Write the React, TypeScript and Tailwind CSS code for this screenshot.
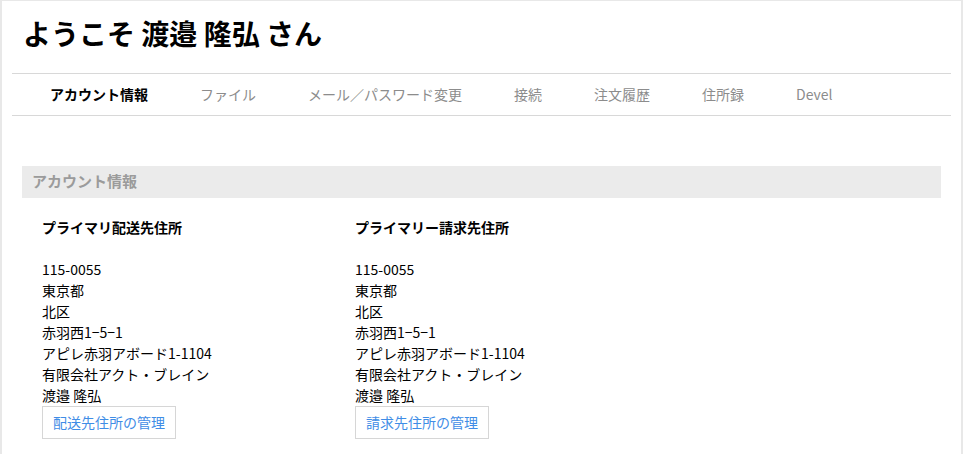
const navItems = [
  { label: "アカウント情報", active: true },
  { label: "ファイル" },
  { label: "メール／パスワード変更" },
  { label: "接続" },
  { label: "注文履歴" },
  { label: "住所録" },
  { label: "Devel" },
];

const addressLines = [
  "115-0055",
  "東京都",
  "北区",
  "赤羽西1−5−1",
  "アピレ赤羽アボード1-1104",
  "有限会社アクト・ブレイン",
  "渡邉 隆弘",
];

interface AddressBlockProps {
  title: string;
  action: string;
}

const AddressBlock = ({ title, action }: AddressBlockProps) => {
  return (
    <div className="w-[313px] shrink-0">
      <h3 className="mb-[21px] text-[14px] font-bold leading-[21px] text-black">{title}</h3>
      <div className="text-[14px] leading-[21px] text-black">
        {addressLines.map((line) => (
          <div key={line}>{line}</div>
        ))}
      </div>
      <button className="h-[33px] w-[134px] border border-[#d6d6d6] bg-white pb-[1px] text-[14px] text-[#3f8de6]">
        {action}
      </button>
    </div>
  );
};

const App = () => {
  return (
    <div
      className="min-h-screen bg-[#e8e8e8] pt-[1px]"
      style={{ fontFamily: '"Noto Sans CJK JP", "Noto Sans", sans-serif' }}
    >
      <div className="mx-[2px] min-h-[453px] bg-white pb-6">
        <h1 className="pl-[21px] pt-[15px] text-[28px] font-bold leading-[34px] text-black">
          ようこそ 渡邉 隆弘 さん
        </h1>

        <nav className="mx-[10px] mt-[23px] flex h-[43px] items-center gap-[52px] border-y border-[#d8d8d8] pb-[1px] pl-[38px]">
          {navItems.map((item) => (
            <span
              key={item.label}
              className={
                item.active
                  ? "text-[14px] font-bold text-black"
                  : "text-[14px] text-[#8c8c8c]"
              }
            >
              {item.label}
            </span>
          ))}
        </nav>

        <div className="mx-[20px] mt-[50px]">
          <div className="flex h-[32px] items-center bg-[#ebebeb] pb-[2px] pl-[10px] text-[15px] font-bold text-[#9b9b9b]">
            アカウント情報
          </div>
          <div className="mt-[19px] flex pl-[20px]">
            <AddressBlock title="プライマリ配送先住所" action="配送先住所の管理" />
            <AddressBlock title="プライマリー請求先住所" action="請求先住所の管理" />
          </div>
        </div>
      </div>
    </div>
  );
};

export default App;
